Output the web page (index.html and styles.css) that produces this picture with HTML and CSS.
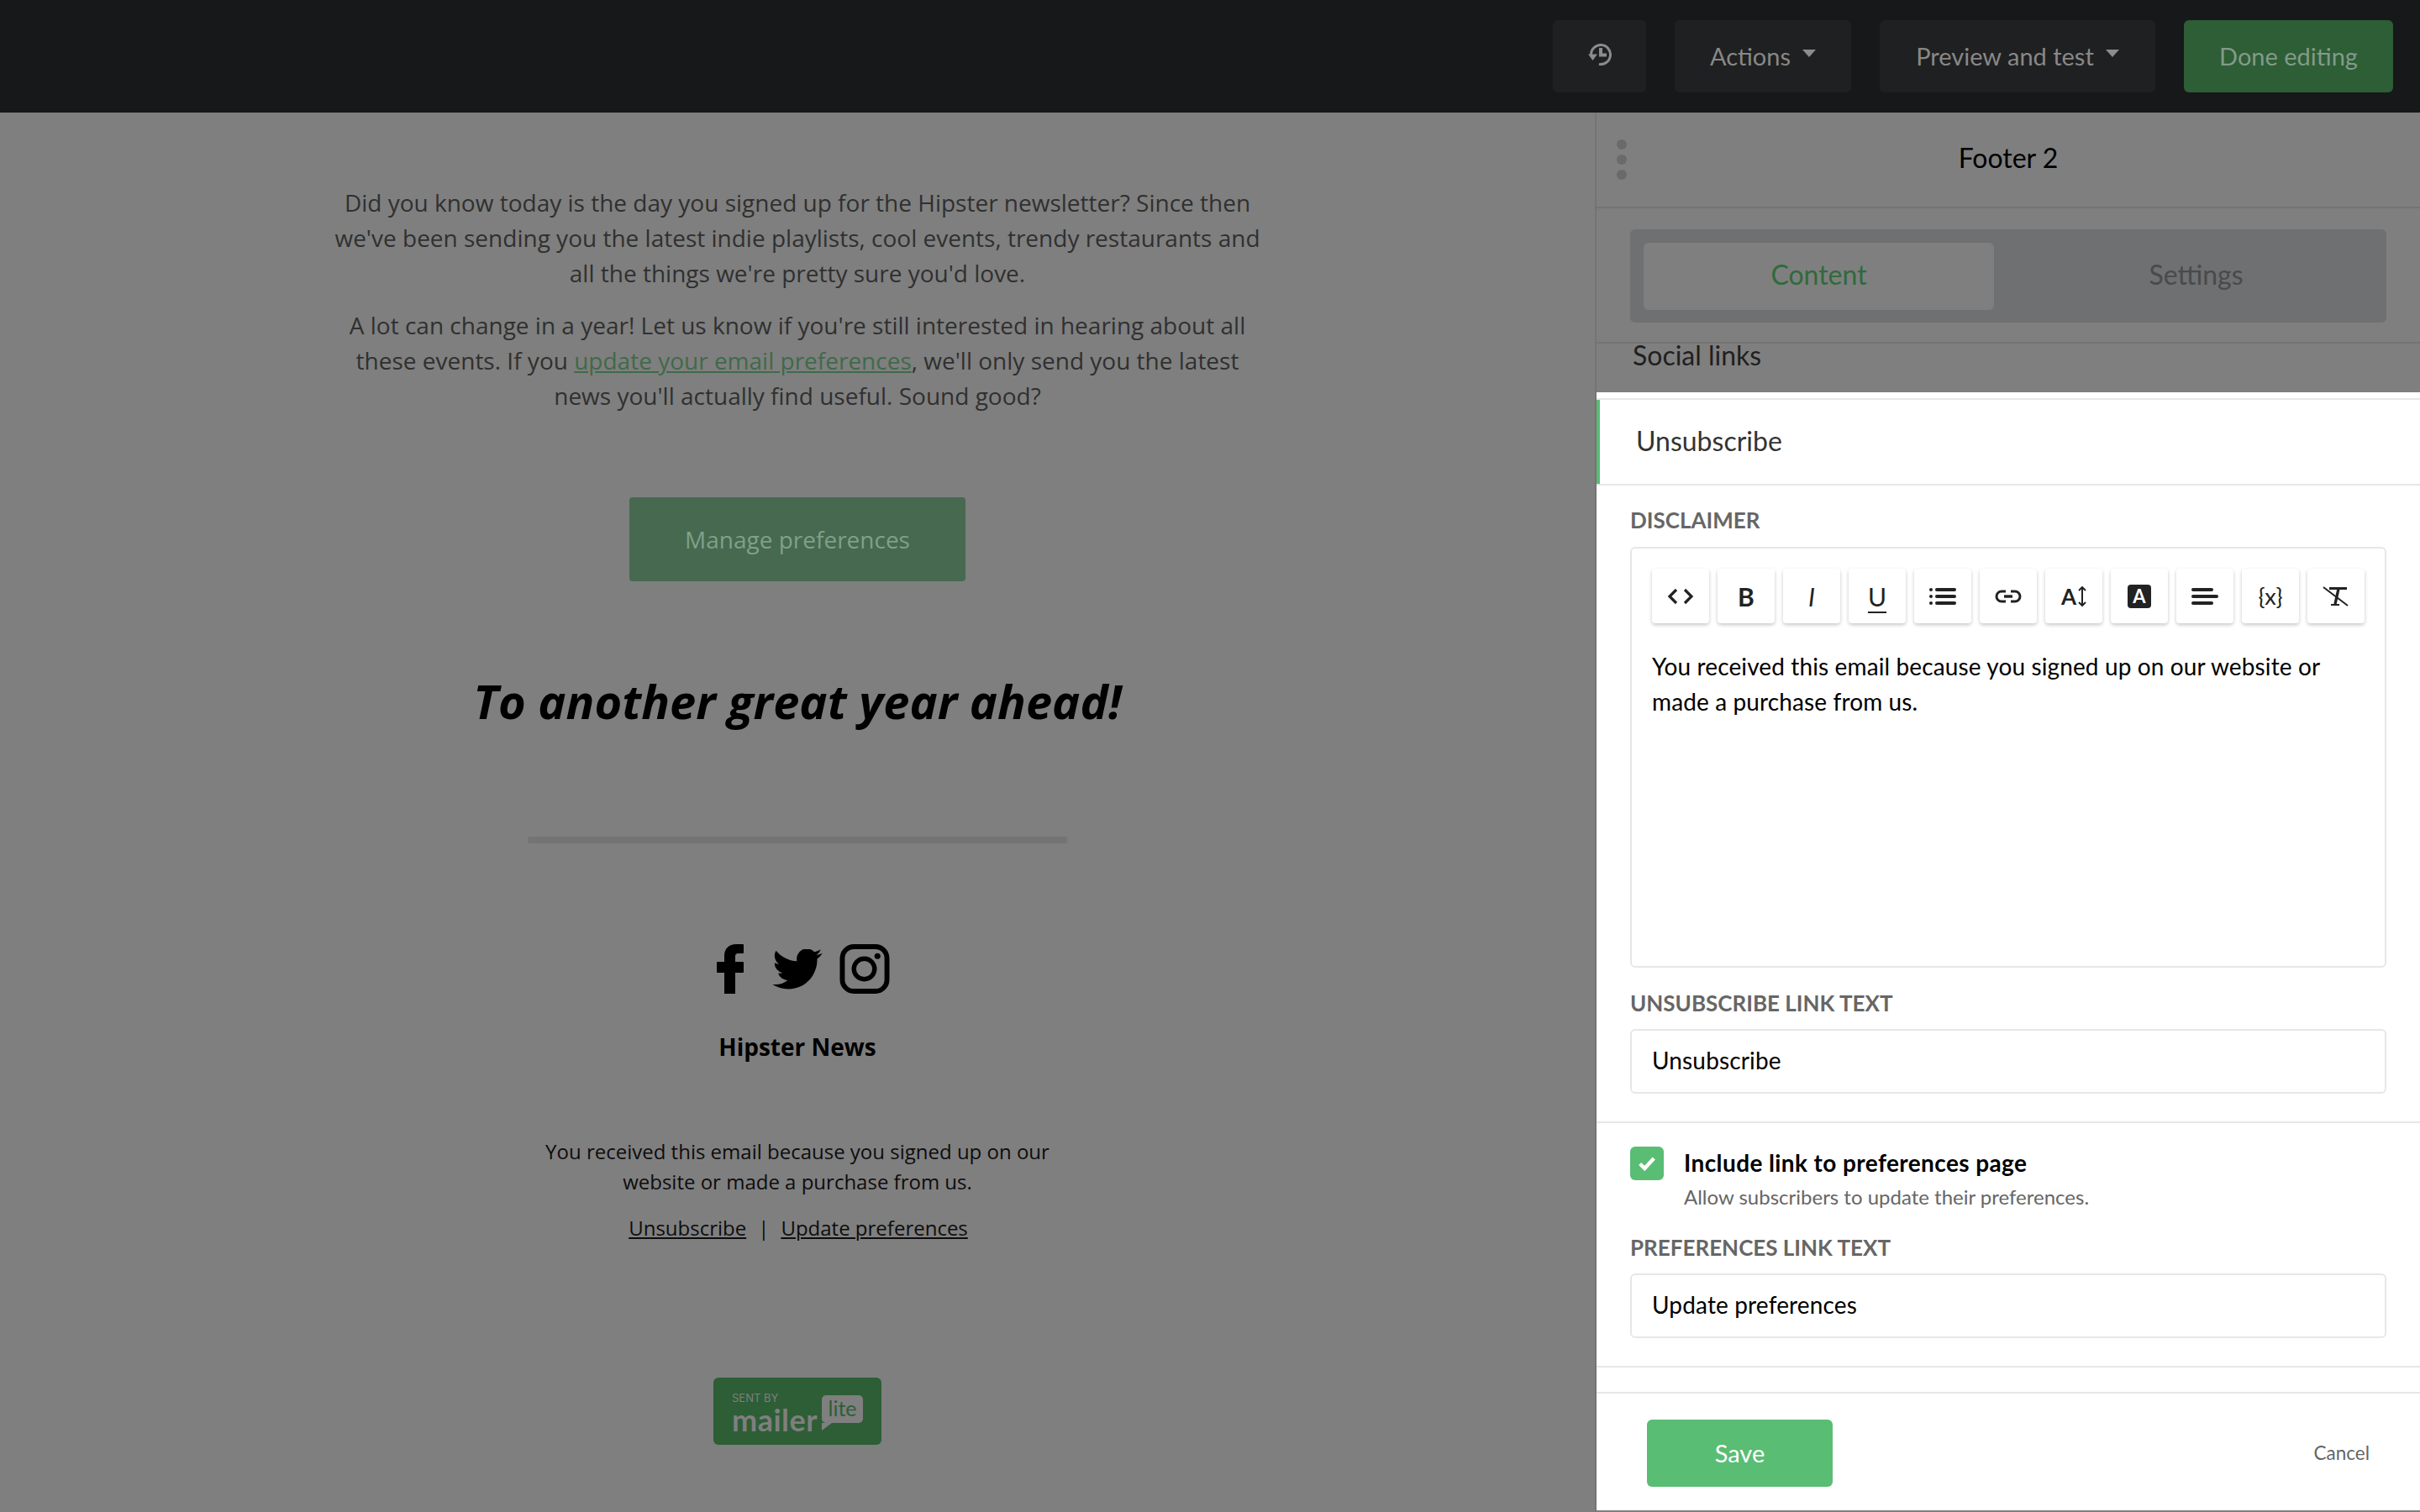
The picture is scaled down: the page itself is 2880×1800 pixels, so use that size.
FILE: index.html
```html
<!DOCTYPE html>
<html lang="en">
<head>
  <meta charset="UTF-8">
  <title>Footer 2</title>
  <link rel="stylesheet" href="styles.css">
</head>
<body>
  <header class="topbar">
    <button class="top-btn history-btn" aria-label="History">
      <svg width="28" height="26" viewBox="0 0 28 26" fill="none">
        <path d="M3.5 13A11.5 11.5 0 1 1 13 24.4" stroke="#8c8c8c" stroke-width="3"/>
        <path d="M0 12.5h11L5.5 20z" fill="#8c8c8c"/>
        <path d="M13 5h4v6.5h5v4h-9z" fill="#8c8c8c"/>
      </svg>
    </button>
    <button class="top-btn actions-btn">Actions<span class="caret"></span></button>
    <button class="top-btn preview-btn">Preview and test<span class="caret"></span></button>
    <button class="top-btn done-btn">Done editing</button>
  </header>

  <main class="layout">
    <section class="email">
      <p class="intro">Did you know today is the day you signed up for the Hipster newsletter? Since then we've been sending you the latest indie playlists, cool events, trendy restaurants and all the things we're pretty sure you'd love.</p>
      <p class="intro intro-2">A lot can change in a year! Let us know if you're still interested in hearing about all these events. If you <a href="#" class="green-link">update your email preferences</a>, we'll only send you the latest news you'll actually find useful. Sound good?</p>
      <a href="#" class="manage-btn">Manage preferences</a>
      <h2 class="closing">To another great year ahead!</h2>
      <div class="divider"></div>
      <div class="socials">
        <svg width="32" height="59" viewBox="0 0 32 59"><path d="M9 59V34H1a1 1 0 0 1-1-1V22a1 1 0 0 1 1-1h8v-7C9 5 15 0 23 0h8a1 1 0 0 1 1 1v9a1 1 0 0 1-1 1h-5c-3 0-4 1-4 4v6h9a1 1 0 0 1 1 1v11a1 1 0 0 1-1 1h-9v25z"/></svg>
        <svg class="ico-tw" width="60" height="48" viewBox="0 2.5 24 19.5"><path d="M23.953 4.57a10 10 0 0 1-2.825.775 4.958 4.958 0 0 0 2.163-2.723c-.951.555-2.005.959-3.127 1.184a4.92 4.92 0 0 0-8.384 4.482C7.69 8.095 4.067 6.13 1.64 3.162a4.822 4.822 0 0 0-.666 2.475c0 1.71.87 3.213 2.188 4.096a4.904 4.904 0 0 1-2.228-.616v.06a4.923 4.923 0 0 0 3.946 4.827 4.996 4.996 0 0 1-2.212.085 4.936 4.936 0 0 0 4.604 3.417 9.867 9.867 0 0 1-6.102 2.105c-.39 0-.779-.023-1.17-.067a13.995 13.995 0 0 0 7.557 2.209c9.053 0 13.998-7.496 13.998-13.985 0-.21 0-.42-.015-.63A9.935 9.935 0 0 0 24 4.59z"/></svg>
        <svg width="60" height="59" viewBox="0 0 60 60"><rect x="3" y="3" width="54" height="54" rx="14" fill="none" stroke="#000" stroke-width="6"/><circle cx="29.5" cy="30" r="12.5" fill="none" stroke="#000" stroke-width="5.5"/><circle cx="45.5" cy="14.5" r="3.6"/></svg>
      </div>
      <div class="brand">Hipster News</div>
      <p class="received">You received this email because you signed up on our website or made a purchase from us.</p>
      <p class="foot-links"><a href="#">Unsubscribe</a><span class="sep">|</span><a href="#">Update preferences</a></p>
      <div class="badge">
        <div class="badge-text">
          <span class="sent">SENT BY</span>
          <span class="mailer">mailer</span>
        </div>
        <span class="lite">lite</span>
      </div>
    </section>

    <aside class="panel">
      <div class="panel-head">
        <span class="dots"><i></i><i></i><i></i></span>
        <span class="panel-title">Footer 2</span>
      </div>
      <div class="tabs-wrap">
        <div class="tabs">
          <span class="tab active">Content</span>
          <span class="tab">Settings</span>
        </div>
      </div>
      <div class="social-row">Social links</div>

      <div class="sheet">
        <div class="sheet-head">Unsubscribe</div>
        <div class="sheet-body">
          <label class="field-label label-disclaimer">DISCLAIMER</label>
          <div class="editor">
            <div class="toolbar">
              <span class="tool"><svg width="32" height="20" viewBox="0 0 32 20" fill="none" stroke="#222" stroke-width="3.2"><path d="M11 2 3 10l8 8M21 2l8 8-8 8"/></svg></span>
              <span class="tool tool-b">B</span>
              <span class="tool tool-i">I</span>
              <span class="tool tool-u">U</span>
              <span class="tool"><svg width="32" height="22" viewBox="0 0 32 22" fill="#222"><circle cx="2" cy="3" r="2"/><circle cx="2" cy="11" r="2"/><circle cx="2" cy="19" r="2"/><rect x="7" y="1" width="25" height="4" rx="2"/><rect x="7" y="9" width="25" height="4" rx="2"/><rect x="7" y="17" width="25" height="4" rx="2"/></svg></span>
              <span class="tool"><svg width="32" height="16" viewBox="0 0 32 16" fill="none" stroke="#222" stroke-width="3"><path d="M13 2H8a6 6 0 0 0 0 12h5M19 2h5a6 6 0 0 1 0 12h-5"/><path d="M11 8h10" stroke-width="3.4"/></svg></span>
              <span class="tool tool-size">A<svg width="10" height="24" viewBox="0 0 10 24" fill="none" stroke="#222" stroke-width="2"><path d="M5 1v22M1 5l4-4 4 4M1 19l4 4 4-4"/></svg></span>
              <span class="tool"><span class="tool-color">A</span></span>
              <span class="tool"><svg width="32" height="20" viewBox="0 0 32 20" fill="#222"><rect y="0" width="26" height="4" rx="2"/><rect y="8" width="32" height="4" rx="2"/><rect y="16" width="26" height="4" rx="2"/></svg></span>
              <span class="tool tool-var">{x}</span>
              <span class="tool"><svg width="32" height="24" viewBox="0 0 32 24" fill="none" stroke="#222"><path d="M8 2.5h21" stroke-width="3"/><path d="M19 3l-4 18" stroke-width="3.4"/><path d="M10 22h10" stroke-width="2"/><path d="M1 1l29 22" stroke-width="2"/></svg></span>
            </div>
            <p class="editor-text">You received this email because you signed up on our website or made a purchase from us.</p>
          </div>
          <label class="field-label label-unsub">UNSUBSCRIBE LINK TEXT</label>
          <div class="input">Unsubscribe</div>
        </div>
        <div class="sheet-body prefs">
          <div class="check-row">
            <span class="check"><svg width="22" height="18" viewBox="0 0 20 16" fill="none" stroke="#fff" stroke-width="4"><path d="M2.5 8.5 7.5 13.5 17.5 2.5"/></svg></span>
            <div>
              <div class="check-title">Include link to preferences page</div>
              <div class="check-sub">Allow subscribers to update their preferences.</div>
            </div>
          </div>
          <label class="field-label label-prefs">PREFERENCES LINK TEXT</label>
          <div class="input">Update preferences</div>
        </div>
        <div class="spacer"></div>
        <div class="sheet-foot">
          <button class="save-btn">Save</button>
          <a href="#" class="cancel">Cancel</a>
        </div>
      </div>
    </aside>
  </main>
</body>
</html>
```

FILE: styles.css
```css
* {
  box-sizing: border-box;
}
html, body {
  margin: 0;
  height: 1800px;
  overflow: hidden;
}
body {
  background-color: #7f7f7f;
  font-family: 'Lato', 'Liberation Sans', sans-serif;
  color: #000;
}
a {
  color: inherit;
}

/* top bar */
.topbar {
  height: 134px;
  background-color: #16181a;
  display: flex;
  justify-content: flex-end;
  align-items: flex-start;
  gap: 34px;
  padding: 24px 32px 0 0;
}
.top-btn {
  height: 86px;
  border: 0;
  border-radius: 6px;
  background-color: #1f2021;
  color: #888;
  font-family: inherit;
  font-size: 29px;
  display: flex;
  align-items: center;
  justify-content: center;
  padding: 0 0 2px;
}
.history-btn {
  width: 111px;
  padding-bottom: 5px;
}
.actions-btn {
  width: 210px;
}
.preview-btn {
  width: 328px;
}
.done-btn {
  width: 249px;
  background-color: #2d5e36;
  color: #849a89;
}
.caret {
  width: 0;
  height: 0;
  margin: 0 0 6px 14px;
  border-left: 8px solid transparent;
  border-right: 8px solid transparent;
  border-top: 9px solid #8c8c8c;
}

/* layout */
.layout {
  display: flex;
  height: 1666px;
}
.email {
  width: 1898px;
  flex: none;
  display: flex;
  flex-direction: column;
  align-items: center;
  font-family: 'Open Sans', sans-serif;
  color: #000;
  padding-top: 86px;
}

/* email preview */
.intro {
  margin: 0;
  width: 1108px;
  text-align: center;
  font-size: 28px;
  line-height: 42px;
  color: #303030;
}
.intro-2 {
  margin-top: 20px;
}
.green-link {
  color: #3f6a4a;
}
.manage-btn {
  margin-top: 100px;
  width: 400px;
  height: 100px;
  border-radius: 4px;
  background-color: #46694f;
  color: #80a089;
  font-size: 28px;
  text-decoration: none;
  display: flex;
  align-items: center;
  justify-content: center;
}
.closing {
  margin: 92px 0 0;
  font-size: 56px;
  line-height: 100px;
  font-weight: 700;
  font-style: italic;
  color: #000;
}
.divider {
  margin-top: 112px;
  width: 642px;
  height: 8px;
  border-radius: 2px;
  background-color: #747474;
}
.socials {
  margin: 120px 0 0 14px;
  display: flex;
  align-items: center;
  gap: 34px;
}
.ico-tw {
  margin-right: -14px;
}
.brand {
  margin-top: 43px;
  font-size: 28px;
  line-height: 40px;
  font-weight: 700;
}
.received {
  margin: 87px 0 0;
  width: 640px;
  text-align: center;
  font-size: 24px;
  line-height: 36px;
  color: #0d0d0d;
}
.foot-links {
  margin: 19px 0 0 2px;
  font-size: 24px;
  line-height: 36px;
  color: #0d0d0d;
}
.sep {
  margin: 0 14px;
}
.badge {
  margin-top: 160px;
  width: 200px;
  height: 80px;
  border-radius: 6px;
  background-color: #2d5e36;
  display: flex;
  align-items: flex-start;
  padding: 17px 0 0 22px;
  font-family: 'Inter', sans-serif;
  color: #7f7f7f;
  position: relative;
}
.badge-text {
  display: flex;
  flex-direction: column;
}
.sent {
  font-size: 13px;
  line-height: 14px;
}
.mailer {
  font-family: 'Lato', sans-serif;
  font-size: 36px;
  line-height: 36px;
  letter-spacing: .5px;
  font-weight: 700;
  margin-top: 1px;
}
.lite {
  position: absolute;
  left: 129px;
  top: 21px;
  width: 49px;
  height: 33px;
  border-radius: 5px;
  background-color: #7f7f7f;
  color: #2d5e36;
  font-family: 'Lato', sans-serif;
  font-size: 25px;
  line-height: 30px;
  text-align: center;
}
.lite::after {
  content: "";
  position: absolute;
  left: 0;
  top: 33px;
  border-top: 9px solid #7f7f7f;
  border-right: 12px solid transparent;
}

/* side panel */
.panel {
  flex: 1;
  border-left: 2px solid #747474;
  display: flex;
  flex-direction: column;
}
.panel-head {
  height: 114px;
  padding-bottom: 6px;
  border-bottom: 2px solid #737373;
  display: flex;
  align-items: center;
  justify-content: center;
  position: relative;
}
.panel-title {
  font-size: 32px;
  color: #000;
}
.dots {
  position: absolute;
  left: 24px;
  top: 32px;
  display: flex;
  flex-direction: column;
  gap: 6px;
}
.dots i {
  width: 12px;
  height: 12px;
  border-radius: 50%;
  background-color: #6a6a6a;
}
.tabs-wrap {
  height: 161px;
  padding: 25px 40px 0;
  border-bottom: 2px solid #737373;
}
.tabs {
  height: 111px;
  background-color: #6e7072;
  border-radius: 6px;
  padding: 16px;
  display: flex;
}
.tab {
  flex: 1;
  height: 80px;
  padding: 0 0 6px 30px;
  border-radius: 6px;
  display: flex;
  align-items: center;
  justify-content: center;
  font-size: 32px;
  color: #4a4a4a;
}
.tab.active {
  flex: none;
  width: 417px;
  padding-left: 0;
  background-color: #7f7f7f;
  color: #2f6a3c;
}
.social-row {
  height: 58px;
  padding-left: 43px;
  font-size: 32px;
  line-height: 28px;
  color: #1f1f1f;
}
.sheet {
  flex: 1;
  background-color: #fff;
  display: flex;
  flex-direction: column;
  border-bottom: 2px solid #7f7f7f;
}
.sheet-head {
  height: 104px;
  margin-top: 7px;
  padding: 0 0 4px 47px;
  border-top: 2px solid #e6e7eb;
  border-bottom: 2px solid #e6e7eb;
  box-shadow: inset 4px 0 0 #5abd74;
  font-size: 32px;
  color: #333;
  display: flex;
  align-items: center;
}
.sheet-body {
  padding: 0 40px;
  border-bottom: 2px solid #e6e7eb;
}
.field-label {
  display: block;
  font-size: 26px;
  line-height: 30px;
  font-weight: 700;
  color: #666;
}
.label-disclaimer {
  padding-top: 26px;
  height: 73px;
}
.editor {
  height: 501px;
  border: 2px solid #e6e7eb;
  border-radius: 6px;
  padding: 24px 24px 0;
}
.toolbar {
  display: flex;
  gap: 10px;
}
.tool {
  width: 68px;
  height: 65px;
  background-color: #fff;
  border-radius: 4px;
  box-shadow: 0 2px 4px rgba(0, 0, 0, .22);
  display: flex;
  align-items: center;
  justify-content: center;
  color: #222;
  font-size: 28px;
}
.tool-b {
  font-weight: 700;
  font-size: 30px;
}
.tool-i {
  font-style: italic;
  font-size: 30px;
}
.tool-u {
  text-decoration: underline;
  text-decoration-thickness: 2px;
  text-underline-offset: 6px;
  font-size: 30px;
}
.tool-size {
  font-size: 26px;
  font-weight: 700;
  gap: 2px;
}
.tool-color {
  width: 28px;
  height: 28px;
  border-radius: 4px;
  background-color: #222;
  color: #fff;
  font-size: 22px;
  font-weight: 700;
  display: flex;
  align-items: center;
  justify-content: center;
}
.tool-var {
  font-size: 27px;
}
.editor-text {
  margin: 30px 0 0;
  font-size: 28px;
  line-height: 42px;
  letter-spacing: .12px;
  color: #000;
}
.label-unsub {
  padding-top: 27px;
  height: 73px;
}
.input {
  height: 77px;
  border: 2px solid #e6e7eb;
  border-radius: 6px;
  padding: 0 0 3px 24px;
  display: flex;
  align-items: center;
  font-size: 28px;
  letter-spacing: .15px;
  color: #000;
  margin-bottom: 33px;
}
.prefs {
  padding-top: 28px;
}
.check-row {
  display: flex;
  gap: 24px;
}
.check {
  width: 40px;
  height: 40px;
  border-radius: 6px;
  background-color: #5abd74;
  display: flex;
  align-items: center;
  justify-content: center;
  flex: none;
}
.check-title {
  font-size: 28px;
  line-height: 38px;
  letter-spacing: .4px;
  font-weight: 700;
  color: #000;
}
.check-sub {
  margin-top: 4px;
  font-size: 24px;
  line-height: 36px;
  color: #666;
}
.label-prefs {
  padding-top: 27px;
  height: 73px;
}
.spacer {
  height: 31px;
  border-bottom: 2px solid #e6e7eb;
}
.sheet-foot {
  flex: 1;
  display: flex;
  align-items: center;
  justify-content: space-between;
  padding: 2px 60px 0;
}
.save-btn {
  width: 221px;
  height: 80px;
  border: 0;
  border-radius: 6px;
  background-color: #5abd74;
  color: #fff;
  font-family: inherit;
  font-size: 29px;
}
.cancel {
  font-size: 22.5px;
  color: #666;
  text-decoration: none;
}
```
